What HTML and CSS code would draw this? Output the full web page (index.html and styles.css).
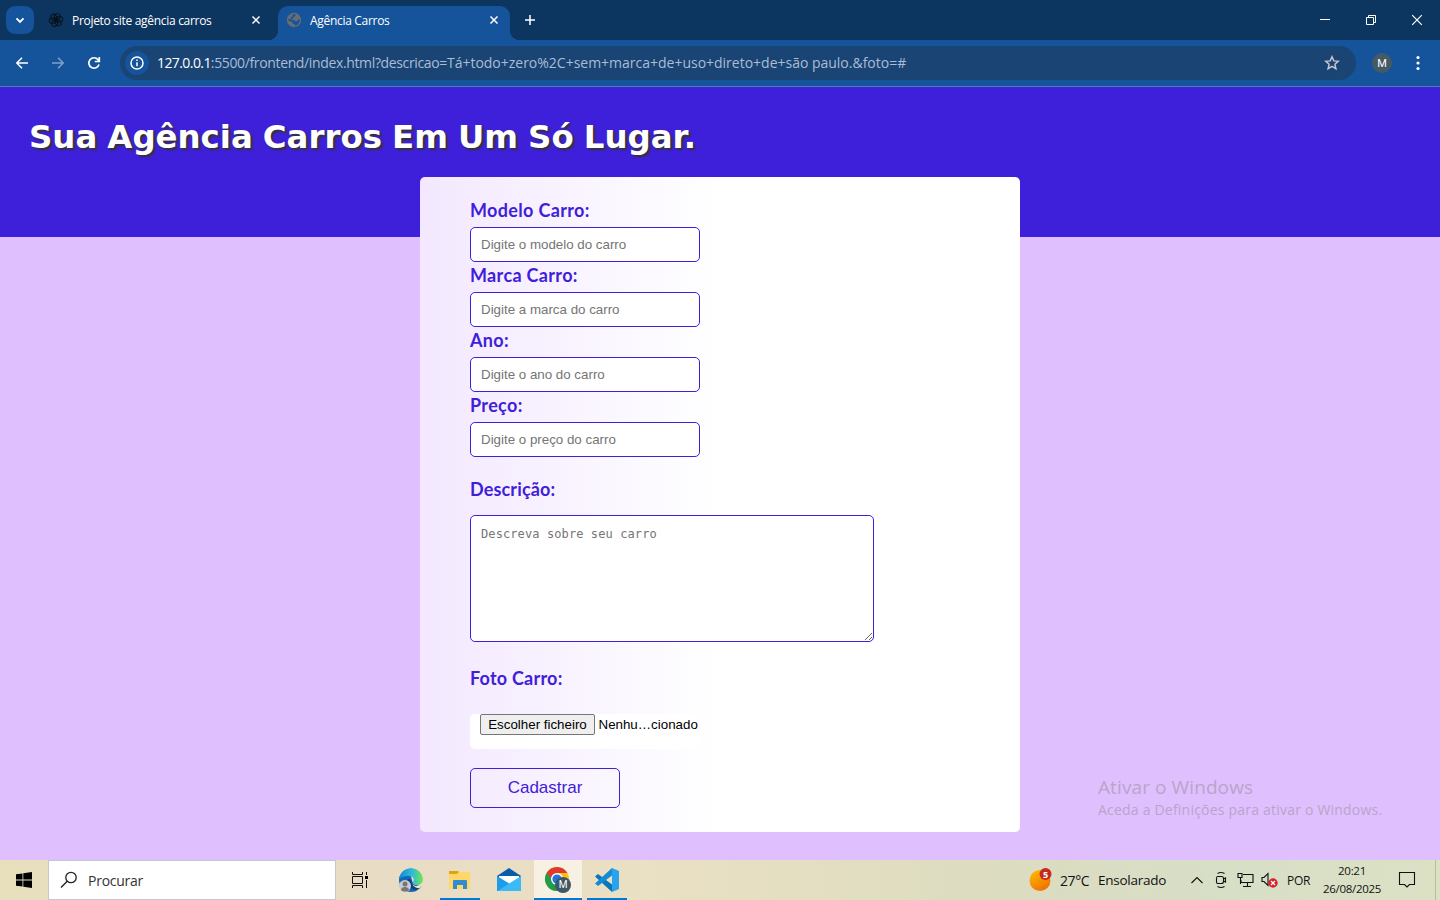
FILE: index.html
```html
<!DOCTYPE html>
<html lang="pt">
<head>
<meta charset="utf-8">
<title>Agência Carros</title>
<link rel="stylesheet" href="styles.css">
</head>
<body>
<div class="tabs">
  <div class="tab-search"><svg width="12" height="12" viewBox="0 0 12 12"><path d="M2.5 4.3 6 7.8l3.5-3.5" class="line bold"/></svg></div>
  <div class="tab">
    <svg class="favicon" width="16" height="16" viewBox="0 0 16 16"><g fill="none" stroke="#07121f" stroke-width="1"><ellipse cx="8" cy="5" rx="2.8" ry="3.8" transform="rotate(20 8 8)"/><ellipse cx="8" cy="5" rx="2.8" ry="3.8" transform="rotate(80 8 8)"/><ellipse cx="8" cy="5" rx="2.8" ry="3.8" transform="rotate(140 8 8)"/><ellipse cx="8" cy="5" rx="2.8" ry="3.8" transform="rotate(200 8 8)"/><ellipse cx="8" cy="5" rx="2.8" ry="3.8" transform="rotate(260 8 8)"/><ellipse cx="8" cy="5" rx="2.8" ry="3.8" transform="rotate(320 8 8)"/></g></svg>
    <span class="tab-title first">Projeto site agência carros</span>
    <svg class="close" width="10" height="10" viewBox="0 0 10 10"><path d="m1.5 1.5 7 7m0-7-7 7" class="line"/></svg>
  </div>
  <div class="tab active">
    <svg class="favicon" width="16" height="16" viewBox="0 0 16 16"><circle cx="8" cy="8" r="7.2" fill="#686d72"/><path d="M9.500 2.300 9.300 4.200 7.500 4.800 7.300 6.500 5.500 6.800 6 8 8.500 8 9.300 9.600 11.300 9.200 11.800 7.800 14 7.500 13.500 10.300 11.500 12.800 8.600 13.800 8.500 12 6.700 11.700 6.200 9.900 2.200 8.500 2.300 7 4.500 7.500 4.800 5.500 6.500 4.500 6.800 2.300Z" fill="#15549b"/></svg>
    <span class="tab-title second">Agência Carros</span>
    <svg class="close" width="10" height="10" viewBox="0 0 10 10"><path d="m1.500 1.500 7 7m0-7-7 7" class="line"/></svg>
  </div>
  <svg class="new-tab" width="12" height="12" viewBox="0 0 12 12"><path d="M6 1v10M1 6h10" class="line"/></svg>
  <div class="window-buttons">
    <svg width="10" height="10" viewBox="0 0 10 10"><path d="M0 4.5h10" class="line thin"/></svg>
    <svg width="10" height="10" viewBox="0 0 10 10"><path d="M2.500 2.500v-2h7v7h-2M.5 2.500h7v7h-7z" class="line thin"/></svg>
    <svg width="10" height="10" viewBox="0 0 10 10"><path d="m.2.2 9.600 9.600m0-9.600L.2 9.800" class="line close-window"/></svg>
  </div>
</div>
<div class="toolbar">
  <svg class="nav" width="16" height="16" viewBox="0 0 16 16"><path d="M14 8H2.800M8 2.800 2.800 8 8 13.200" class="line"/></svg>
  <svg class="nav dim" width="16" height="16" viewBox="0 0 16 16"><path d="M2 8h11.200M8 2.800 13.200 8 8 13.200" class="line"/></svg>
  <svg class="nav" width="16" height="16" viewBox="0 0 16 16"><path d="M13 9.500A5.200 5.200 0 1 1 12 4.600L13.300 6M13.300 2v4.500H8.800" class="line reload"/></svg>
  <div class="address">
    <span class="info"><svg width="14" height="14" viewBox="0 0 14 14"><circle cx="7" cy="7" r="6" class="line"/><path d="M7 6.300v4M7 3.400v1.500" class="line"/></svg></span>
    <span class="url"><b>127.0.0.1</b><span class="path">:5500/frontend/index.html?descricao=</span>Tá+todo+zero%2C+sem+marca+de+uso+direto+de+são paulo.&amp;foto=#</span>
    <svg width="16" height="16" viewBox="0 0 16 16"><path d="m8 1.800 1.800 4.100 4.400.4-3.300 3 1 4.400L8 11.400l-3.900 2.300 1-4.400-3.300-3 4.400-.4z" fill="none" stroke="#c5c8cf" stroke-width="1.500"/></svg>
  </div>
  <span class="profile">M</span>
  <svg class="kebab" width="4" height="16" viewBox="0 0 4 16"><circle cx="2" cy="2.500" r="1.600"/><circle cx="2" cy="8" r="1.600"/><circle cx="2" cy="13.500" r="1.600"/></svg>
</div>
<main class="page">
  <header class="hero"><h1>Sua Agência Carros Em Um Só Lugar.</h1></header>
  <form class="card">
    <label>Modelo Carro:</label>
    <input class="field" placeholder="Digite o modelo do carro">
    <label>Marca Carro:</label>
    <input class="field" placeholder="Digite a marca do carro">
    <label>Ano:</label>
    <input class="field" placeholder="Digite o ano do carro">
    <label>Preço:</label>
    <input class="field" placeholder="Digite o preço do carro">
    <label class="desc">Descrição:</label>
    <textarea class="field area" placeholder="Descreva sobre seu carro"></textarea>
    <label class="foto">Foto Carro:</label>
    <div class="file"><span class="choose">Escolher ficheiro</span><span class="chosen">Nenhu…cionado</span></div>
    <button class="submit" type="button">Cadastrar</button>
  </form>
  <div class="watermark"><div class="wm-title">Ativar o Windows</div><div class="wm-text">Aceda a Definições para ativar o Windows.</div></div>
</main>
<footer class="taskbar">
  <div class="start"><svg width="16" height="16" viewBox="0 0 16 16"><path d="M0 2.300 6.500 1.400V7.600H0zM7.300 1.300 16 0v7.600H7.300zM0 8.400h6.500v6.200L0 13.700zM7.300 8.400H16V16l-8.700-1.300z"/></svg></div>
  <div class="search"><svg width="18" height="18" viewBox="0 0 18 18"><circle cx="11" cy="6.500" r="5.200" fill="none" stroke="#222" stroke-width="1.300"/><path d="M7.200 10.300 1 16.500" stroke="#222" stroke-width="1.400"/></svg><span>Procurar</span></div>
  <div class="task view"><svg width="18" height="16" viewBox="0 0 18 16"><path d="M1.500 0v2.500h10V0M1.500 4.500h10v7h-10zM1.500 16v-2.500h10V16M15.500 0v3M15.500 8v8" fill="none" stroke="#111" stroke-width="1"/><path d="M14 4h3v3h-3z"/></svg></div>
  <div class="task edge"><svg width="24" height="24" viewBox="0 0 24 24"><defs><linearGradient id="eg" x1="0" x2="1"><stop stop-color="#1688d8"/><stop offset=".55" stop-color="#30bad7"/><stop offset="1" stop-color="#70e84b"/></linearGradient><clipPath id="ec"><circle cx="12" cy="12" r="12"/></clipPath></defs><g clip-path="url(#ec)"><path d="M0 8h12l2 8 10 3v5H0z" fill="#1467b8"/><path d="M0 12C0 4 6 0 12 0c7 0 12 5 12 11 0 4-3 6-6 6-3 0-5-1-4-3 2-3 0-6-4-6-5 0-9 1-10 4z" fill="url(#eg)"/><path d="M9 11c-2 3-1 8 4 10 4 2 8 0 10-3-4 2-9 1-10-4-.5-2-2-3-4-3z" fill="#103f83"/><path d="M12.500 13c0 4 4 6 8 4.500l3.500-1V19c-5 3-11 0-11.500-6z" fill="#e9e2c8"/></g><circle cx="6" cy="18" r="6" fill="#c8cbd0"/><circle cx="6" cy="16" r="2.500" fill="#777"/><path d="M2 22c0-4 8-4 8 0-2 2-6 2-8 0z" fill="#777"/></svg></div>
  <div class="task folder open"><svg width="22" height="20" viewBox="0 0 22 20"><path d="M0 1h9l2 2h10v6H0z" fill="#e1a20d"/><path d="M0 4h8l2-2h11v17H0z" fill="#ffd766"/><path d="M4 19v-8q0-1 1-1h12q1 0 1 1v8h-4v-4H8v4z" fill="#318bd3"/></svg></div>
  <div class="task mail"><svg width="24" height="24" viewBox="0 0 24 24"><path d="m0 8 12-8 12 8v15H0z" fill="#075dab"/><path d="M2 8h20v8H2z" fill="#fff"/><path d="m0 8 13 8L0 23z" fill="#1f9ce8"/><path d="m24 8-24 15h24z" fill="#3bbaf5"/></svg></div>
  <div class="task chrome open"><svg width="26" height="26" viewBox="0 0 26 26"><circle cx="12" cy="12" r="12" fill="#fbc116"/><path d="M12 12 1.600 6A12 12 0 0 0 12 24l5-9z" fill="#219b4c"/><path d="M1.600 6A12 12 0 0 1 22.400 6H12L7 12z" fill="#de3a2d"/><circle cx="12" cy="12" r="6" fill="#fff"/><circle cx="12" cy="12" r="4.600" fill="#2374e1"/><circle cx="18" cy="18" r="8" fill="#405765"/><text x="18" y="21.300" text-anchor="middle" class="badge-text">M</text></svg></div>
  <div class="task code open"><svg width="24" height="24" viewBox="0 0 24 24"><path d="M0 8.500 3 6 19 18l-2 6z" fill="#0876bd"/><path d="m0 15.500 3 2.500L19 6l-2-6z" fill="#168bd4"/><path d="m17 0 7 3v18l-7 3z" fill="#28a3ed"/></svg></div>
  <div class="weather"><svg width="24" height="24" viewBox="0 0 24 24"><defs><linearGradient id="sun" x1="0" y1="0" x2=".6" y2="1"><stop stop-color="#ffc000"/><stop offset="1" stop-color="#f07200"/></linearGradient></defs><circle cx="11" cy="12.500" r="10.500" fill="url(#sun)"/><circle cx="16.500" cy="6" r="6" fill="#c42b1c"/><text x="16.500" y="9.500" text-anchor="middle" class="alert-text">5</text></svg><span class="temp">27°C</span><span class="sky">Ensolarado</span></div>
  <div class="tray">
    <svg width="12" height="8" viewBox="0 0 12 8"><path d="m.5 7 5.500-5.500L11.500 7" class="ink"/></svg>
    <svg class="meet" width="12" height="16" viewBox="0 0 12 16"><path d="M2.500 1.500Q6-.5 9.500 1.500M2.500 14.500q3.500 2 7 0M2.500 4.500h4q2 0 2 2v3q0 2-2 2h-4q-1 0-1-2v-3q0-2 1-2M8.500 7l2-1v4l-2-1" class="ink"/></svg>
    <svg class="net" width="17" height="14" viewBox="0 0 17 14"><path d="M6 1.500h10v8H4V7M10.500 10v3M6 13.500h8M1 .500h4v4H1zM3.500 5v6" class="ink"/></svg>
    <svg class="sound" width="17" height="16" viewBox="0 0 17 16"><path d="M1 5.500h2l4-4v12l-4-4H1z" class="ink"/><circle cx="12" cy="11" r="4.700" fill="#d9202c"/><path d="m10 9 4 4m0-4-4 4" stroke="#fff" stroke-width="1.300"/></svg>
    <span class="lang">POR</span>
  </div>
  <div class="clock"><span class="time">20:21</span><span class="date">26/08/2025</span></div>
  <svg class="notify" width="16" height="16" viewBox="0 0 16 16"><path d="M.5.500h15v12h-5L8 15l-2.500-2.500h-5z" class="ink"/></svg>
  <span class="desktop-edge"></span>
</footer>
</body>
</html>
```

FILE: styles.css
```css
* { box-sizing: border-box; }
body { margin: 0; height: 900px; display: flex; flex-direction: column; overflow: hidden; font-family: "Open Sans", "Noto Sans", sans-serif; }
svg { display: block; flex: none; overflow: visible; }
.line { fill: none; stroke: #fff; stroke-width: 1.5; }
.bold { stroke-width: 1.9; }
.reload { stroke-width: 1.7; }
.thin { stroke-width: 1; }
.close-window { stroke-width: 1.2; }
.ink { fill: none; stroke: #111; stroke-width: 1.1; }
.tabs { height: 40px; flex: none; background: #0c355f; display: flex; align-items: center; padding-left: 6px; color: #fff; }
.tab-search { width: 28px; height: 28px; border-radius: 9px; background: #15549b; display: grid; place-items: center; }
.tab { width: 232px; height: 34px; margin-top: 6px; display: flex; align-items: center; padding: 0 11px 6px 8px; font-size: 12px; position: relative; white-space: nowrap; }
.tab:not(.active) { margin-left: 6px; }
.tab.active { background: #15549b; border-radius: 10px 10px 0 0; margin-left: 6px; }
.tab.active::before, .tab.active::after { content: ""; position: absolute; bottom: 0; width: 10px; height: 10px; }
.tab.active::before { left: -10px; background: radial-gradient(circle at 0 0, transparent 10px, #15549b 10.500px); }
.tab.active::after { right: -10px; background: radial-gradient(circle at 100% 0, transparent 10px, #15549b 10.500px); }
.tab-title { margin-left: 8px; letter-spacing: -.3px; }
.tab .close { margin-left: auto; }
.new-tab { margin-left: 14px; }
.window-buttons { margin-left: auto; display: flex; gap: 36px; padding-right: 18px; }
.toolbar { height: 47px; flex: none; background: #15549b; border-bottom: 1px solid #4c7eb4; display: flex; align-items: center; padding-left: 14px; }
.nav { margin-right: 20px; }
.nav.dim { opacity: .45; }
.address { width: 1236px; height: 34px; margin-left: -2px; border-radius: 17px; background: #194473; display: flex; align-items: center; padding: 0 16px 0 5px; }
.info { width: 24px; height: 24px; border-radius: 12px; background: #15549b; display: grid; place-items: center; }
.url { flex: 1; padding-left: 8px; color: #a9bdd6; font-size: 14px; line-height: 20px; letter-spacing: -.01px; white-space: nowrap; }
.url b { color: #fff; font-weight: 400; letter-spacing: -.58px; }
.url .path { letter-spacing: -.36px; }
.profile { width: 20px; height: 20px; margin-left: 16px; border-radius: 10px; background: #465a65; color: #fff; font: 11px/21px Roboto, sans-serif; text-align: center; }
.kebab { margin-left: 24px; fill: #fff; }
.page { height: 773px; flex: none; background: #e0bfff; position: relative; }
.hero { height: 150px; background: #3f20da; padding: 30px 29px 0; }
.hero h1 { margin: 0; color: #fff; font: bold 32.400px/41px "DejaVu Sans", sans-serif; word-spacing: -1.200px; text-shadow: 2px 2px 2px #333; white-space: nowrap; }
.card { width: 600px; height: 655px; margin: -60px auto 0; padding: 20px 50px; position: relative; border-radius: 5px; background: linear-gradient(90deg, #f3e8ff, #fff 50%); display: flex; flex-direction: column; align-items: flex-start; }
.card label { height: 30px; flex: none; color: #3f20da; font: bold 18px/26px Lato, sans-serif; letter-spacing: .34px; }
.field { width: 230px; height: 35px; flex: none; border: 1px solid #3f20da; border-radius: 5px; background: #fff; padding: 0 10px; font: 13.333px "Liberation Sans", sans-serif; }
.field::placeholder { color: #757575; }
.card label.desc { margin-top: 19px; height: 39px; letter-spacing: .15px; }
.area { width: 404px; height: 127px; padding: 10px; font: 12px/16px "DejaVu Sans Mono", monospace; letter-spacing: .1px; }
.card label.foto { margin-top: 23px; height: 49px; letter-spacing: .22px; }
.file { width: 230px; height: 35px; flex: none; background: #fff; border-radius: 5px; padding-left: 10px; display: flex; font: 13.333px/21px "Liberation Sans", sans-serif; white-space: nowrap; }
.choose { width: 115px; height: 21px; border: 1px solid #767676; border-radius: 2px; background: #efefef; line-height: 19px; text-align: center; }
.chosen { margin-left: 3.500px; }
.submit { width: 150px; height: 40px; flex: none; margin-top: 19px; border: 1px solid #3f20da; border-radius: 5px; background: transparent; color: #3f20da; font: 17px "Liberation Sans", sans-serif; }
.watermark { position: absolute; left: 1098px; top: 687px; color: #b8a5c8; white-space: nowrap; }
.wm-title { font-size: 19px; line-height: 27px; letter-spacing: .1px; }
.wm-text { font-size: 14px; line-height: 18px; letter-spacing: .21px; }
.taskbar { height: 40px; flex: none; background: linear-gradient(90deg, #e8dfbd, #e9dcc5 27%, #eae0c3 45%, #dcdcc0 70%, #d7dfc7 85%, #dce1c4); display: flex; align-items: center; color: #111; }
.start { width: 48px; display: grid; place-items: center; }
.search { width: 288px; height: 40px; border: 1px solid #c5c8c9; background: #fff; display: flex; align-items: center; padding-left: 11px; gap: 10px; font-size: 14px; letter-spacing: -.25px; color: #333; }
.task { width: 48px; height: 40px; display: grid; place-items: center; }
.edge { margin-left: 2px; padding-left: 1px; }
.folder { width: 40px; margin-left: 6px; }
.mail { margin-left: 5px; }
.chrome { width: 48px; margin-left: 1px; background: #f6f1e3; }
.code { width: 40px; margin-left: 5px; }
.open { border-bottom: 2px solid #0078d7; padding-top: 2px; }
.badge-text { fill: #fff; font: 10px Roboto, sans-serif; }
.alert-text { fill: #fff; font: bold 9px "Open Sans", sans-serif; }
.weather { margin-left: 402px; display: flex; align-items: center; font-size: 14px; white-space: nowrap; width: 162px; }
.temp { margin-left: 7px; width: 38px; letter-spacing: -.4px; }
.sky { font-size: 13.500px; letter-spacing: -.25px; }
.tray { display: flex; align-items: center; font-size: 12px; }
.meet { margin-left: 12px; }
.net { margin-left: 10px; }
.sound { margin-left: 7px; }
.lang { margin-left: 9px; width: 25px; letter-spacing: -.3px; }
.clock { width: 60px; margin-left: 10px; display: flex; flex-direction: column; align-items: center; font-size: 11.500px; line-height: 18px; letter-spacing: -.3px; white-space: nowrap; }
.notify { margin-left: 17px; }
.desktop-edge { width: 1px; height: 40px; margin-left: auto; margin-right: 4px; background: #b8bca7; }
```
